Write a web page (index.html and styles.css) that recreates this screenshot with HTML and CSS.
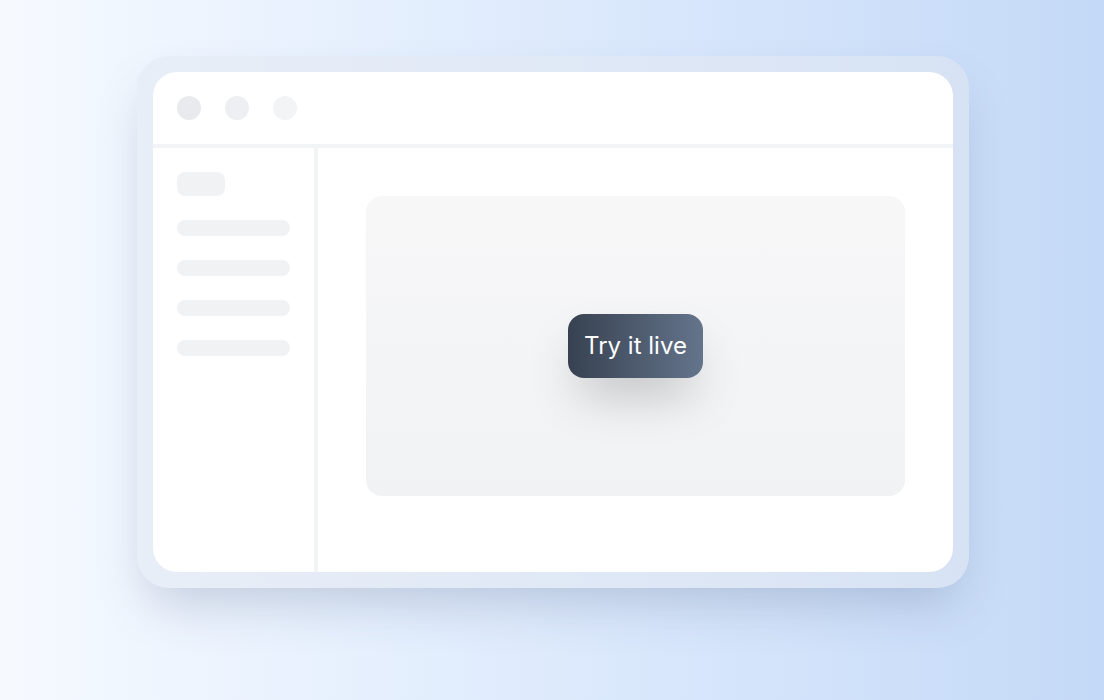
FILE: index.html
```html
<!DOCTYPE html>
<html>
<head>
<meta charset="utf-8">
<link rel="stylesheet" href="styles.css">
</head>
<body>
<div class="stage">
  <div class="frame">
    <div class="window">
      <div class="titlebar">
        <span class="dot dot1"></span>
        <span class="dot dot2"></span>
        <span class="dot dot3"></span>
      </div>
      <div class="body">
        <aside class="sidebar">
          <div class="pill"></div>
          <div class="line"></div>
          <div class="line"></div>
          <div class="line"></div>
          <div class="line"></div>
        </aside>
        <main class="main">
          <div class="panel">
            <button class="cta">Try it live</button>
          </div>
        </main>
      </div>
    </div>
  </div>
</div>
</body>
</html>
```
FILE: styles.css
```css
html, body {
  margin: 0;
  padding: 0;
}
body {
  width: 1104px;
  height: 700px;
  overflow: hidden;
  font-family: Inter, "Noto Sans", sans-serif;
}
.stage {
  width: 1104px;
  height: 700px;
  background: linear-gradient(90deg, #f6faff 0%, #e0ecfd 45%, #c4d9f7 100%);
  display: flex;
  justify-content: center;
  padding-top: 56px;
  box-sizing: border-box;
}
.frame {
  width: 832px;
  height: 532px;
  box-sizing: border-box;
  padding: 16px;
  border-radius: 32px;
  background: rgba(226, 232, 240, 0.55);
  box-shadow: 0 25px 50px -12px rgba(60, 80, 120, 0.25);
  margin-left: 2px;
}
.window {
  width: 800px;
  height: 500px;
  background: #fff;
  border-radius: 24px;
  overflow: hidden;
  display: flex;
  flex-direction: column;
}
.titlebar {
  flex: none;
  height: 48px;
  padding: 24px 24px 0;
  display: flex;
  gap: 24px;
  border-bottom: 4px solid #f3f4f6;
}
.dot {
  width: 24px;
  height: 24px;
  border-radius: 50%;
}
.dot1 { background: #e9eaee; }
.dot2 { background: #eeeff2; }
.dot3 { background: #f3f4f6; }
.body {
  flex: 1;
  display: flex;
}
.sidebar {
  width: 165px;
  border-right: 4px solid #f3f4f6;
  padding: 24px;
  box-sizing: border-box;
  display: flex;
  flex-direction: column;
  gap: 24px;
}
.pill {
  width: 48px;
  height: 24px;
  border-radius: 8px;
  background: #f1f2f4;
}
.line {
  width: 113px;
  height: 16px;
  border-radius: 8px;
  background: #f1f2f4;
}
.main {
  flex: 1;
  padding: 48px;
}
.panel {
  height: 300px;
  border-radius: 16px;
  background: linear-gradient(180deg, #f7f7f8 0%, #f1f2f4 100%);
  display: flex;
  align-items: center;
  justify-content: center;
}
.cta {
  font-family: Inter, "Noto Sans", sans-serif;
  font-size: 24px;
  line-height: 32px;
  color: #fff;
  border: 0;
  padding: 16px;
  border-radius: 16px;
  background: linear-gradient(90deg, #374151 0%, #64748b 100%);
  box-shadow: 0 25px 50px -12px rgba(0, 0, 0, 0.25);
  cursor: pointer;
}
```
